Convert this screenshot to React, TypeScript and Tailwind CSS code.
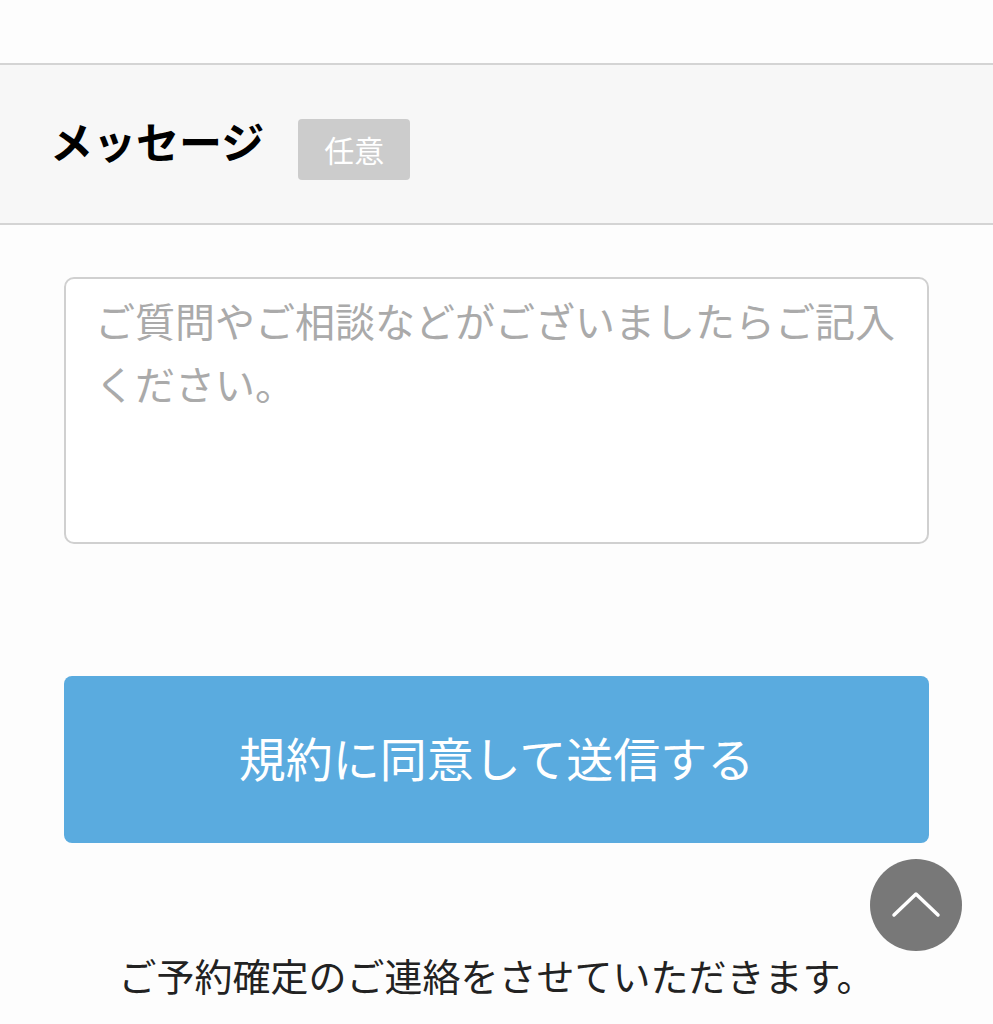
import { useState } from "react";

const App = () => {
    const [message, setMessage] = useState("")

    return (
        <div className="relative w-full h-[1024px] overflow-hidden bg-[#fdfdfd] text-[#222]" style={{ fontFamily: '"Noto Sans CJK JP", "Noto Sans", sans-serif' }}>
            <div className="h-[63px]"></div>
            <div className="flex items-center gap-[34px] h-[162px] pl-[50px] bg-[#f7f7f7] border-y-2 border-[#d4d4d4]">
                <h2 className="mb-[8px] text-[43px] font-bold leading-none text-black">メッセージ</h2>
                <span className="mt-[10px] flex items-center justify-center w-[112px] h-[61px] rounded-[4px] bg-[#cccccc] text-white text-[30px] leading-none">任意</span>
            </div>
            <div className="px-[64px] pt-[52px]">
                <textarea
                    className="block w-full h-[267px] resize-none rounded-[10px] border-2 border-[#d0d0d0] bg-white px-[29px] py-[10px] text-[40px] leading-[63px] text-[#333] placeholder:text-[#aaaaaa] outline-none"
                    placeholder="ご質問やご相談などがございましたらご記入ください。"
                    value={message}
                    onChange={(e) => setMessage(e.target.value)}
                />
                <button className="mt-[132px] w-full h-[167px] pb-[6px] rounded-[8px] bg-[#5aabdf] text-white text-[47px] leading-none cursor-pointer hover:opacity-80">
                    規約に同意して送信する
                </button>
                <p className="mt-[113px] text-center text-[38px] leading-none text-[#222]">ご予約確定のご連絡をさせていただきます。</p>
            </div>
            {/* page top button */}
            <button className="absolute left-[870px] top-[859px] w-[92px] h-[92px] rounded-full bg-[#787878] flex items-center justify-center">
                <svg width="50" height="30" viewBox="0 0 50 30" fill="none">
                    <path d="M3 25 L25 4 L47 25" stroke="white" strokeWidth="3.5" strokeLinecap="round" strokeLinejoin="round" />
                </svg>
            </button>
        </div>
    )
}
export default App;
